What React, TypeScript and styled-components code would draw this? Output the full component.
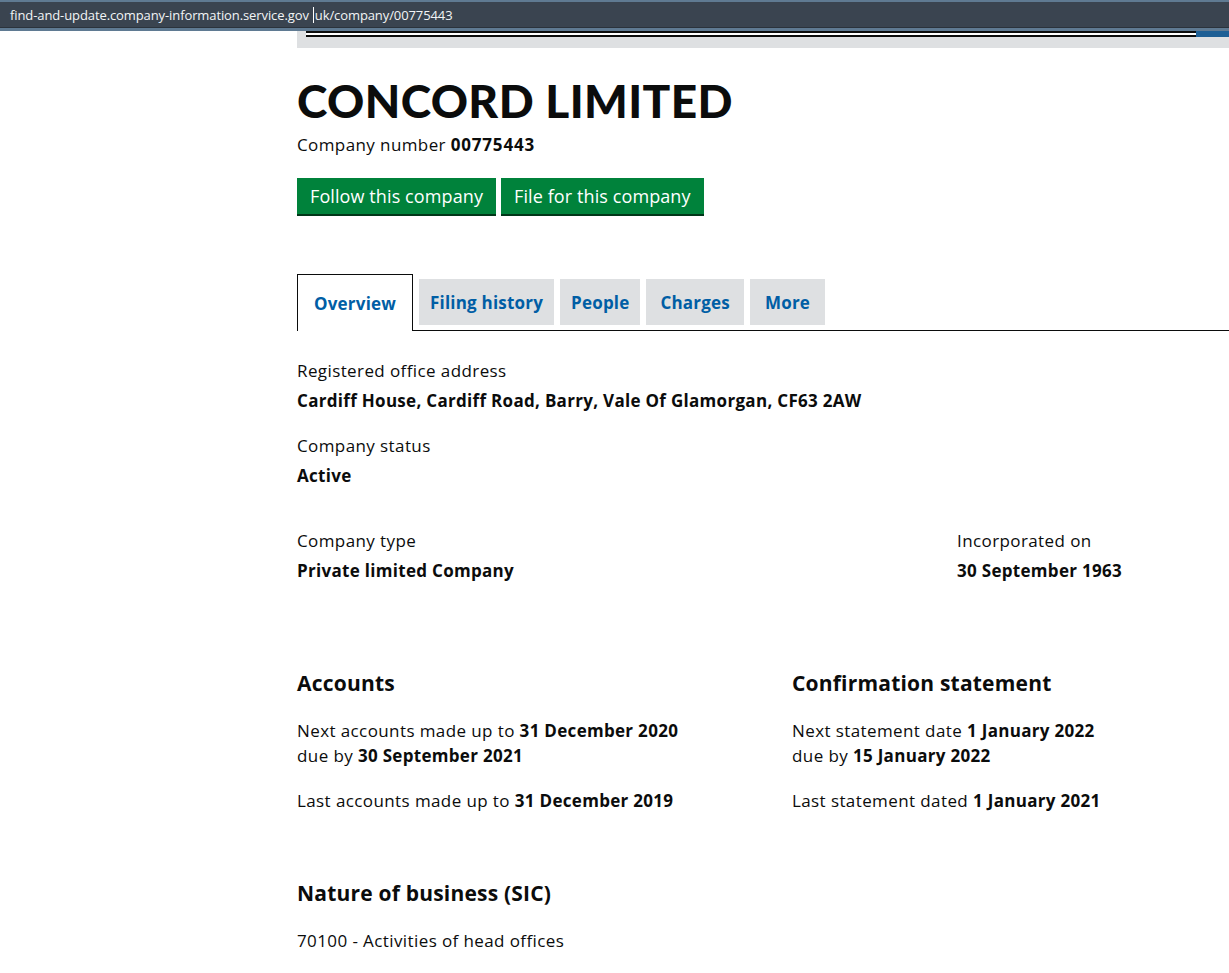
import React from 'react';
import styled, {createGlobalStyle} from 'styled-components';

const GlobalStyle = createGlobalStyle`
  html, body {
    margin: 0;
    padding: 0;
    background: #ffffff;
    overflow-x: hidden;
  }
  body {
    font-family: 'Open Sans', 'Lato', sans-serif;
    color: #0b0c0c;
  }
`;

const AddressBar = styled.div`
  height: 26px;
  background: #3a4450;
  border-top: 2px solid #5f7a92;
  border-bottom: 3px solid #5f7a92;
  box-shadow: inset 0 -1px 0 #2b333c;
  display: flex;
  align-items: center;
  padding-left: 10px;
  font-family: 'Open Sans', sans-serif;
  font-size: 13px;
  color: #f2f4f6;
  letter-spacing: -0.1px;
`;

const Caret = styled.span`
  display: inline-block;
  width: 1px;
  height: 16px;
  background: #ffffff;
  margin: 0 1px 0 4px;
  vertical-align: middle;
`;

const HeaderStrip = styled.div`
  margin-left: 297px;
  height: 17px;
  background: #dee0e2;
`;

const HeaderRule = styled.div`
  display: flex;
  height: 6px;
`;

const RuleLine = styled.div`
  margin-left: 9px;
  width: 890px;
  border-top: 2px solid #0b0c0c;
  border-bottom: 2px solid #0b0c0c;
  background: #ffffff;
  height: 2px;
`;

const RuleBlue = styled.div`
  flex: 1;
  background: #1d5f95;
`;

const Main = styled.main`
  margin-left: 297px;
  width: 990px;
  padding-top: 25px;
  font-size: 17px;
  letter-spacing: 0.4px;
`;

const Title = styled.h1`
  margin: 0;
  font-family: 'Lato', sans-serif;
  font-weight: 900;
  font-size: 46px;
  line-height: 56px;
  letter-spacing: 0.4px;
  color: #0b0c0c;
`;

const CompanyNumber = styled.p`
  margin: 4px 0 0;
  line-height: 24px;
  strong {
    font-weight: 700;
    letter-spacing: 0.8px;
  }
`;

const Actions = styled.div`
  display: flex;
  gap: 5px;
  margin-top: 21px;
`;

const GreenButton = styled.button`
  font-family: 'Open Sans', sans-serif;
  font-size: 18px;
  letter-spacing: 0.1px;
  color: #ffffff;
  background: #00823b;
  border: none;
  box-shadow: 0 2px 0 #003618;
  height: 36px;
  padding: 0 13px;
  cursor: pointer;
`;

const TabList = styled.ul`
  list-style: none;
  margin: 60px 0 0;
  padding: 0;
  display: flex;
  align-items: flex-end;
  border-bottom: 1px solid #0b0c0c;
`;

const Tab = styled.li<{$active?: boolean; $pad?: number}>`
  height: ${(p) => (p.$active ? '57px' : '46px')};
  margin-bottom: ${(p) => (p.$active ? '-1px' : '5px')};
  margin-right: 6px;
  padding: 0 ${(p) => p.$pad ?? 11}px;
  box-sizing: border-box;
  display: flex;
  align-items: center;
  background: ${(p) => (p.$active ? '#ffffff' : '#dee0e2')};
  border: ${(p) => (p.$active ? '1px solid #0b0c0c' : 'none')};
  border-bottom: none;
  font-weight: 700;
  font-size: 17px;
  letter-spacing: 0.2px;
  color: #005ea5;
`;

const Field = styled.dl`
  margin: 0;
`;

const Label = styled.dt`
  line-height: 25px;
`;

const Value = styled.dd`
  margin: 5px 0 0;
  line-height: 25px;
  font-weight: 700;
  letter-spacing: 0.3px;
`;

const Fields = styled.div`
  display: flex;
  flex-direction: column;
  gap: 20px;
  margin-top: 27px;
`;

const Row = styled.div<{$split: string; $top?: number}>`
  display: grid;
  grid-template-columns: ${(p) => p.$split};
  margin-top: ${(p) => p.$top ?? 0}px;
`;

const SectionHeading = styled.h2`
  margin: 0 0 21px;
  font-size: 21px;
  line-height: 28px;
  font-weight: 700;
  letter-spacing: 0.2px;
`;

const Text = styled.p`
  margin: 0 0 20px;
  line-height: 25px;
  strong {
    font-weight: 700;
    letter-spacing: 0.3px;
  }
`;

export default function App() {
  return (
    <>
      <GlobalStyle />
      <AddressBar>
        find-and-update.company-information.service.gov<Caret />uk/company/00775443
      </AddressBar>
      <HeaderStrip>
        <HeaderRule>
          <RuleLine />
          <RuleBlue />
        </HeaderRule>
      </HeaderStrip>
      <Main>
        <Title>CONCORD LIMITED</Title>
        <CompanyNumber>
          Company number <strong>00775443</strong>
        </CompanyNumber>
        <Actions>
          <GreenButton>Follow this company</GreenButton>
          <GreenButton>File for this company</GreenButton>
        </Actions>

        <TabList>
          <Tab $active $pad={16}>Overview</Tab>
          <Tab $pad={11}>Filing history</Tab>
          <Tab $pad={11}>People</Tab>
          <Tab $pad={14}>Charges</Tab>
          <Tab $pad={15}>More</Tab>
        </TabList>

        <Fields>
          <Field>
            <Label>Registered office address</Label>
            <Value>Cardiff House, Cardiff Road, Barry, Vale Of Glamorgan, CF63 2AW</Value>
          </Field>
          <Field>
            <Label>Company status</Label>
            <Value>Active</Value>
          </Field>
        </Fields>

        <Row $split="660px 330px" $top={40}>
          <Field>
            <Label>Company type</Label>
            <Value>Private limited Company</Value>
          </Field>
          <Field>
            <Label>Incorporated on</Label>
            <Value>30 September 1963</Value>
          </Field>
        </Row>

        <Row $split="495px 495px" $top={86}>
          <section>
            <SectionHeading>Accounts</SectionHeading>
            <Text>
              Next accounts made up to <strong>31 December 2020</strong>
              <br />
              due by <strong>30 September 2021</strong>
            </Text>
            <Text>
              Last accounts made up to <strong>31 December 2019</strong>
            </Text>
          </section>
          <section>
            <SectionHeading>Confirmation statement</SectionHeading>
            <Text>
              Next statement date <strong>1 January 2022</strong>
              <br />
              due by <strong>15 January 2022</strong>
            </Text>
            <Text>
              Last statement dated <strong>1 January 2021</strong>
            </Text>
          </section>
        </Row>

        <Row $split="990px" $top={46}>
          <section>
            <SectionHeading>Nature of business (SIC)</SectionHeading>
            <Text>70100 - Activities of head offices</Text>
          </section>
        </Row>
      </Main>
    </>
  );
}
